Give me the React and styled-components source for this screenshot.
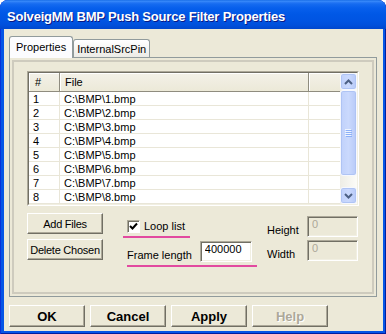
import React from 'react';
import styled, { createGlobalStyle, css } from 'styled-components';

const GlobalStyle = createGlobalStyle`
  html, body { margin: 0; padding: 0; background: #ffffff; }
  body { font-family: "Liberation Sans", Arial, sans-serif; font-size: 11px; color: #000; }
  #root { width: 386px; height: 334px; }
`;

const Window = styled.div`
  width: 386px;
  height: 334px;
  box-sizing: border-box;
  display: flex;
  flex-direction: column;
  border-radius: 8px 8px 0 0;
  overflow: hidden;
  background: #0555E6;
  box-shadow: inset 1px 0 #0831D9, inset -1px 0 #001EA0, inset 0 -1px #001EA0;
`;

const TitleBar = styled.div`
  flex: 0 0 29px;
  box-sizing: border-box;
  display: flex;
  align-items: center;
  padding: 3px 0 0 7px;
  background: linear-gradient(180deg, #0A5FE0 0px, #3D8FFB 1px, #2B7CF6 2px, #156BF0 4px, #075FEC 8px, #0058E6 14px, #0055E3 20px, #0050DC 25px, #0047CD 29px);
  color: #ffffff;
  font-family: "Liberation Sans", Arial, sans-serif;
  font-weight: bold;
  font-size: 13px;
  letter-spacing: -0.2px;
  text-shadow: 1px 1px #0A1883;
`;

const Client = styled.div`
  flex: 1;
  margin: 0 3px 3px 4px;
  background: #ECE9D8;
  display: flex;
  flex-direction: column;
  padding: 7px 6px 4px 5px;
`;

const TabStrip = styled.div`
  display: flex;
  align-items: flex-end;
  height: 21px;
  position: relative;
  z-index: 1;
`;

const Tab = styled.div`
  box-sizing: border-box;
  display: flex;
  align-items: center;
  border: 1px solid #919B9C;
  border-bottom: none;
  border-radius: 3px 3px 0 0;
  font-size: 11px;
  ${(p) =>
    p.$active
      ? css`
          height: 22px;
          margin-bottom: -1px;
          padding: 0 6px 1px;
          background: #FCFCFE;
        `
      : css`
          height: 18px;
          padding: 1px 3px 0;
          background: linear-gradient(180deg, #FFFFFF, #ECEBE6);
        `}
`;

const Panel = styled.div`
  height: 240px;
  box-sizing: border-box;
  border: 1px solid #919B9C;
  box-shadow: inset 0 0 0 2px #ECE9D8, inset 0 0 0 4px #CECBBE;
  padding: 13px 17px 0 17px;
  display: flex;
  flex-direction: column;
`;

const ListFrame = styled.div`
  border: 1px solid;
  border-color: #ACA899 #FFFFFF #FFFFFF #ACA899;
`;

const ListInner = styled.div`
  display: flex;
  border: 1px solid;
  border-color: #716F64 #F1EFE2 #F1EFE2 #716F64;
  background: #ffffff;
`;

const Grid = styled.div`
  flex: 1;
  display: grid;
  grid-template-columns: 31px 249px 1fr;
  grid-template-rows: 19px repeat(8, 14px);
`;

const HeaderCell = styled.div`
  box-sizing: border-box;
  display: flex;
  align-items: center;
  padding-left: ${(p) => (p.$first ? 6 : 5)}px;
  background: linear-gradient(180deg, #F3F1E8, #ECE9D8);
  border-bottom: 1px solid #8F8C7F;
  border-right: ${(p) => (p.$last ? 'none' : '1px solid #8F8C7F')};
  box-shadow: inset 1px 1px #FFFFFF;
`;

const Cell = styled.div`
  box-sizing: border-box;
  padding: 1px 0 0 4px;
  line-height: 12px;
  white-space: nowrap;
  overflow: hidden;
  border-bottom: 1px solid #E9E6D8;
  border-right: ${(p) => (p.$last ? 'none' : '1px solid #E9E6D8')};
`;

const ScrollBar = styled.div`
  width: 17px;
  display: flex;
  flex-direction: column;
  background: linear-gradient(90deg, #EEEDE5, #FCFCF8);
`;

const scrollPiece = css`
  box-sizing: border-box;
  border: 1px solid #F6F8FE;
  border-radius: 3px;
  box-shadow: inset 0 0 0 1px #AFC4F4;
  background: linear-gradient(90deg, #C0D1FB, #CAD9FD 50%, #B8CAF8);
  display: flex;
  align-items: center;
  justify-content: center;
`;

const ScrollBtn = styled.div`
  ${scrollPiece};
  height: 17px;
  flex-shrink: 0;
`;

const Thumb = styled.div`
  ${scrollPiece};
  height: 86px;
  flex-shrink: 0;
`;

const Track = styled.div`
  flex: 1;
`;

const Controls = styled.div`
  display: flex;
  margin-top: 7px;
`;

const ButtonCol = styled.div`
  display: flex;
  flex-direction: column;
  gap: 5px;
  width: 76px;
`;

const buttonFace = css`
  box-sizing: border-box;
  background: #ECE9D8;
  border: 1px solid;
  border-color: #FFFFFF #716F64 #716F64 #FFFFFF;
  box-shadow: inset -1px -1px #ACA899;
  font-family: "Liberation Sans", Arial, sans-serif;
  color: #000;
  padding: 0;
  display: flex;
  align-items: center;
  justify-content: center;
  white-space: nowrap;
`;

const SmallButton = styled.button`
  ${buttonFace};
  width: 76px;
  height: 21px;
  font-size: 11px;
  letter-spacing: -0.25px;
`;

const MiddleCol = styled.div`
  display: flex;
  flex-direction: column;
  margin-left: 20px;
  width: 134px;
`;

const LoopRow = styled.label`
  box-sizing: border-box;
  display: flex;
  align-items: center;
  gap: 4px;
  width: 67px;
  height: 22px;
  margin-top: 3px;
  padding-left: 4px;
  border-bottom: 2px solid #E24AA0;
`;

const CheckBox = styled.span`
  box-sizing: border-box;
  width: 13px;
  height: 13px;
  background: #ffffff;
  border: 1px solid;
  border-color: #ACA899 #FFFFFF #FFFFFF #ACA899;
  box-shadow: inset 1px 1px #716F64;
  display: flex;
  align-items: center;
  justify-content: center;
`;

const FrameRow = styled.div`
  box-sizing: border-box;
  display: flex;
  align-items: flex-end;
  gap: 8px;
  width: 130px;
  margin: 3px 0 0 4px;
  padding-bottom: 3px;
  border-bottom: 2px solid #E24AA0;
`;

const Label = styled.span`
  line-height: 13px;
  white-space: nowrap;
`;

const TextBox = styled.input`
  box-sizing: border-box;
  width: ${(p) => p.$w}px;
  height: 21px;
  border: 1px solid;
  border-color: #ACA899 #FFFFFF #FFFFFF #ACA899;
  box-shadow: inset 1px 1px #716F64, inset -1px -1px #F1EFE2;
  padding: 0 2px 6px 4px;
  margin: 0;
  font-family: "Liberation Sans", Arial, sans-serif;
  font-size: 11px;
  color: #000;
  background: #ffffff;
  outline: none;
  &:disabled {
    background: #ECE9D8;
    color: #ACA899;
  }
`;

const RightGrid = styled.div`
  display: grid;
  grid-template-columns: 40px 51px;
  grid-auto-rows: 21px;
  row-gap: 3px;
  margin: 3px 0 0 10px;
  align-self: flex-start;
  & > ${Label} {
    align-self: end;
  }
`;

const ButtonRow = styled.div`
  display: flex;
  gap: 5px;
  margin-top: 8px;
`;

const BigButton = styled.button`
  ${buttonFace};
  width: 76px;
  height: 22px;
  font-size: 13px;
  font-weight: bold;
  &:disabled {
    color: #ACA899;
    text-shadow: 1px 1px #FFFFFF;
  }
`;

const Chevron = ({ down }) => (
  <svg width="9" height="6" viewBox="0 0 9 6">
    <polyline
      points={down ? '1,1 4.5,4.5 8,1' : '1,5 4.5,1.5 8,5'}
      fill="none"
      stroke="#4D6185"
      strokeWidth="2"
    />
  </svg>
);

const Grip = () => (
  <svg width="7" height="8" viewBox="0 0 7 8">
    {[0, 2, 4, 6].map((y) => (
      <React.Fragment key={y}>
        <rect x="0" y={y} width="6" height="1" fill="#EEF4FE" />
        <rect x="1" y={y + 1} width="6" height="1" fill="#8CB0F8" />
      </React.Fragment>
    ))}
  </svg>
);

const rows = [1, 2, 3, 4, 5, 6, 7, 8];

export default function App() {
  return (
    <>
      <GlobalStyle />
      <Window>
        <TitleBar>SolveigMM BMP Push Source Filter Properties</TitleBar>
        <Client>
          <TabStrip>
            <Tab $active>Properties</Tab>
            <Tab>InternalSrcPin</Tab>
          </TabStrip>
          <Panel>
            <ListFrame>
              <ListInner>
                <Grid>
                  <HeaderCell $first>#</HeaderCell>
                  <HeaderCell>File</HeaderCell>
                  <HeaderCell $last />
                  {rows.map((n) => (
                    <React.Fragment key={n}>
                      <Cell>{n}</Cell>
                      <Cell>{`C:\\BMP\\${n}.bmp`}</Cell>
                      <Cell $last />
                    </React.Fragment>
                  ))}
                </Grid>
                <ScrollBar>
                  <ScrollBtn>
                    <Chevron />
                  </ScrollBtn>
                  <Thumb>
                    <Grip />
                  </Thumb>
                  <Track />
                  <ScrollBtn>
                    <Chevron down />
                  </ScrollBtn>
                </ScrollBar>
              </ListInner>
            </ListFrame>
            <Controls>
              <ButtonCol>
                <SmallButton>Add Files</SmallButton>
                <SmallButton>Delete Chosen</SmallButton>
              </ButtonCol>
              <MiddleCol>
                <LoopRow>
                  <CheckBox>
                    <svg width="9" height="9" viewBox="0 0 9 9">
                      <polyline points="1,4 3.5,6.5 8,1.5" fill="none" stroke="#000" strokeWidth="2" />
                    </svg>
                  </CheckBox>
                  <Label>Loop list</Label>
                </LoopRow>
                <FrameRow>
                  <Label>Frame length</Label>
                  <TextBox $w={52} defaultValue="400000" />
                </FrameRow>
              </MiddleCol>
              <RightGrid>
                <Label>Height</Label>
                <TextBox $w={51} defaultValue="0" disabled />
                <Label>Width</Label>
                <TextBox $w={51} defaultValue="0" disabled />
              </RightGrid>
            </Controls>
          </Panel>
          <ButtonRow>
            <BigButton>OK</BigButton>
            <BigButton>Cancel</BigButton>
            <BigButton>Apply</BigButton>
            <BigButton disabled>Help</BigButton>
          </ButtonRow>
        </Client>
      </Window>
    </>
  );
}
